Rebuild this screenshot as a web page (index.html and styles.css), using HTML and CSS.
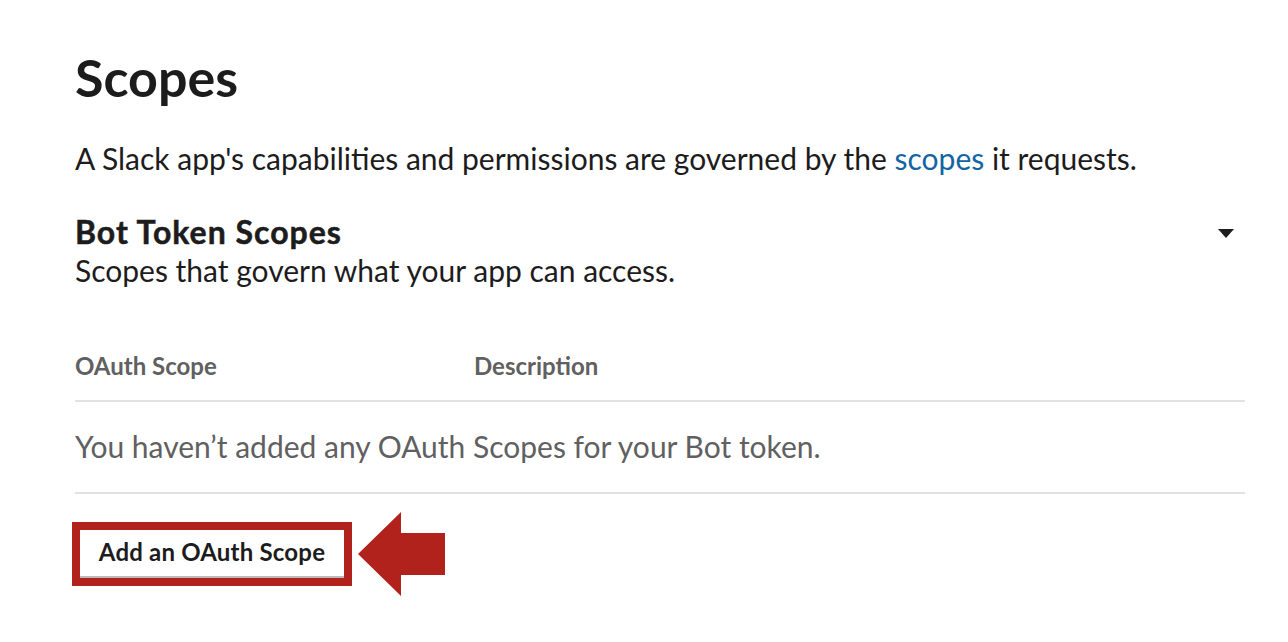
FILE: index.html
```html
<!DOCTYPE html>
<html lang="en">
<head>
<meta charset="utf-8">
<title>Scopes</title>
<link rel="stylesheet" href="styles.css">
</head>
<body>
<main class="page">
  <h1 class="title">Scopes</h1>
  <p class="intro">A Slack app's capabilities and permissions are governed by the <a class="link" href="#">scopes</a> it requests.</p>

  <section class="scope-section">
    <div class="section-head">
      <h2 class="section-title">Bot Token Scopes</h2>
      <span class="caret" aria-hidden="true"></span>
    </div>
    <p class="section-sub">Scopes that govern what your app can access.</p>

    <div class="table">
      <div class="table-head">
        <span class="col-scope">OAuth Scope</span>
        <span class="col-desc">Description</span>
      </div>
      <div class="table-empty">You haven’t added any OAuth Scopes for your Bot token.</div>
    </div>

    <div class="action-row">
      <div class="highlight">
        <button class="btn" type="button">Add an OAuth Scope</button>
      </div>
      <svg class="arrow" width="87" height="84" viewBox="0 0 87 84" aria-hidden="true">
        <polygon points="0,42 43,0 43,21 87,21 87,63 43,63 43,84" fill="#b1221c"/>
      </svg>
    </div>
  </section>
</main>
</body>
</html>
```

FILE: styles.css
```css
html, body {
  margin: 0;
  padding: 0;
  background: #ffffff;
}

body {
  font-family: Lato, "Open Sans", "Liberation Sans", sans-serif;
  color: #1d1c1d;
}

.page {
  padding: 46px 43px 0 75px;
}

.title {
  margin: 0;
  font-size: 52px;
  line-height: 62px;
  font-weight: 700;
}

.intro {
  margin: 32px 0 0;
  font-size: 30px;
  line-height: 36px;
}

.link {
  color: #1264a3;
  text-decoration: none;
}

.scope-section {
  margin-top: 36px;
}

.section-head {
  display: flex;
  align-items: center;
  justify-content: space-between;
}

.section-title {
  margin: 0;
  font-size: 32px;
  line-height: 40px;
  font-weight: 700;
  letter-spacing: 1px;
  -webkit-text-stroke: 0.5px #1d1c1d;
}

.caret {
  width: 0;
  height: 0;
  margin: 2px 11px 0 0;
  border-left: 8px solid transparent;
  border-right: 8px solid transparent;
  border-top: 9px solid #1d1c1d;
}

.section-sub {
  margin: 0;
  font-size: 30px;
  line-height: 36px;
}

.table {
  margin-top: 63px;
}

.table-head {
  display: flex;
  padding-bottom: 19px;
  border-bottom: 2px solid #e2e2e2;
  font-size: 24px;
  line-height: 30px;
  font-weight: 700;
  color: #616061;
}

.col-scope {
  width: 399px;
}

.table-empty {
  padding: 26px 0 28px;
  border-bottom: 2px solid #e2e2e2;
  font-size: 30px;
  line-height: 36px;
  color: #616061;
}

.action-row {
  display: flex;
  align-items: center;
  gap: 6px;
  margin: 18px 0 0 -3px;
}

.highlight {
  border: 8px solid #b1221c;
}

.btn {
  display: block;
  box-sizing: border-box;
  width: 264px;
  height: 48px;
  margin: 0;
  padding: 0 0 4px;
  background: #ffffff;
  border: 0;
  border-bottom: 2px solid #bcbcbc;
  font-family: Lato, "Open Sans", "Liberation Sans", sans-serif;
  font-size: 24px;
  font-weight: 700;
  letter-spacing: 0.2px;
  color: #1d1c1d;
}
```
